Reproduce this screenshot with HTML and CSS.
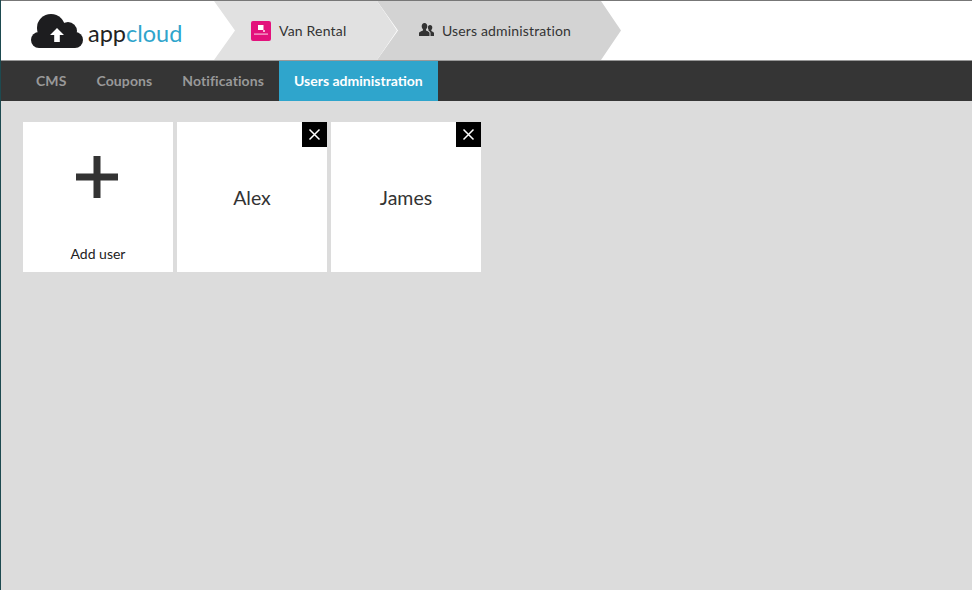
FILE: index.html
```html
<!DOCTYPE html>
<html lang="en">
<head>
<meta charset="utf-8">
<title>appcloud - Users administration</title>
<link rel="stylesheet" href="styles.css">
</head>
<body>
<div class="app">
  <header class="topbar">
    <a class="logo">
      <svg class="logo-cloud" width="52" height="34" viewBox="0 0 52 34">
        <g fill="#1d1d1f">
          <circle cx="20" cy="14" r="14"/>
          <circle cx="37" cy="17" r="9"/>
          <circle cx="44" cy="26" r="8"/>
          <circle cx="8" cy="26" r="8"/>
          <rect x="8" y="18" width="36" height="16"/>
        </g>
        <path fill="#fff" d="M26 14L33 21H28.800V28H23.200V21H19Z"/>
      </svg>
      <span class="logo-text">app<span class="logo-accent">cloud</span></span>
    </a>
    <nav class="crumbs">
      <a class="crumb crumb-app">
        <span class="app-icon">
          <svg width="20" height="20" viewBox="0 0 20 20">
            <rect width="20" height="20" rx="2" fill="#e3127c"/>
            <path fill="#fff" d="M7 4H12.500V9H7Z"/>
            <path fill="#f7b6d6" d="M12 9H14V11H12Z"/>
            <rect x="3" y="12.500" width="14" height="1.200" fill="#f7b6d6"/>
          </svg>
        </span>
        Van Rental
      </a>
      <a class="crumb crumb-section">
        <svg class="users-icon" width="15" height="15" viewBox="0 0 15 15">
          <path fill="#333" d="M5.500 1C7.300 1 8.300 2.500 8.300 4.300C8.300 5.700 7.700 6.800 7 7.400V8.500C8.800 9.200 10.500 10 10.500 11V14H0V11C0 10 2.200 9.200 4 8.500V7.400C3.300 6.800 2.700 5.700 2.700 4.300C2.700 2.500 3.700 1 5.500 1Z"/>
          <path fill="#333" d="M11 3C12.500 3 13.300 4.200 13.300 5.600C13.300 6.700 12.800 7.600 12.300 8.100V8.900C13.500 9.400 15 10.100 15 11V14H11.500V11C11.500 10 10.500 9.200 9.300 8.500C9.500 8.300 9.600 8.100 9.700 7.900C9.200 7.300 8.900 6.500 8.900 5.600C8.900 4.200 9.700 3 11 3Z"/>
        </svg>
        Users administration
      </a>
    </nav>
  </header>
  <nav class="menu">
    <a class="menu-item">CMS</a>
    <a class="menu-item">Coupons</a>
    <a class="menu-item">Notifications</a>
    <a class="menu-item menu-item-active">Users administration</a>
  </nav>
  <main class="content">
    <div class="card card-add">
      <svg class="plus" width="42" height="42" viewBox="0 0 42 42">
        <path fill="#333" d="M17.500 0H24.500V17.500H42V24.500H24.500V42H17.500V24.500H0V17.500H17.500Z"/>
      </svg>
      <span class="add-label">Add user</span>
    </div>
    <div class="card">
      <span class="card-name">Alex</span>
      <button class="remove" aria-label="Remove Alex">
        <svg width="13" height="13" viewBox="0 0 13 13"><path stroke="#fff" stroke-width="1.500" d="M1.500 1.500L11.500 11.500M11.500 1.500L1.500 11.500"/></svg>
      </button>
    </div>
    <div class="card">
      <span class="card-name">James</span>
      <button class="remove" aria-label="Remove James">
        <svg width="13" height="13" viewBox="0 0 13 13"><path stroke="#fff" stroke-width="1.500" d="M1.500 1.500L11.500 11.500M11.500 1.500L1.500 11.500"/></svg>
      </button>
    </div>
  </main>
</div>
</body>
</html>
```
FILE: styles.css
```css
* { box-sizing: border-box; }
html, body { margin: 0; height: 100%; }
body {
  font-family: Lato, "Liberation Sans", sans-serif;
  background: #dcdcdc;
  color: #333;
  overflow: hidden;
}
.app {
  display: flex;
  flex-direction: column;
  height: 590px;
  border-left: 1px solid #1d4a50;
}
.topbar {
  display: flex;
  height: 61px;
  background: #fff;
  border-top: 1px solid #777;
  border-bottom: 1px solid #999;
}
.logo {
  display: flex;
  align-items: flex-start;
  width: 213px;
  padding: 13px 0 0 30px;
}
.logo-cloud { flex: none; }
.logo-text {
  margin: 4px 0 0 5px;
  font-size: 23.500px;
  line-height: 30px;
  font-weight: 400;
  color: #222;
}
.logo-accent { color: #2fa5cc; }
.crumbs { display: flex; height: 59px; }
.crumb {
  display: flex;
  align-items: center;
  height: 59px;
  font-size: 14px;
  color: #333;
  clip-path: polygon(0 0, calc(100% - 20px) 0, 100% 50%, calc(100% - 20px) 100%, 0 100%, 21px 50%);
}
.crumb-app {
  position: relative;
  z-index: 1;
  width: 183px;
  padding-left: 37px;
  background: #e1e1e1;
  letter-spacing: 0.2px;
}
.crumb-section {
  width: 244px;
  margin-left: -20px;
  padding-left: 42px;
  background: #d3d3d3;
  letter-spacing: 0.15px;
}
.app-icon { display: flex; margin-right: 8px; }
.users-icon { margin-right: 8px; flex: none; margin-top: -3px; }
.menu {
  display: flex;
  height: 40px;
  padding-left: 20px;
  background: #353535;
}
.menu-item {
  padding: 0 15px;
  font-size: 14px;
  font-weight: 700;
  line-height: 40px;
  color: #999;
  letter-spacing: 0.1px;
}
.menu-item-active {
  background: #2fa5cc;
  color: #fff;
  letter-spacing: 0;
}
.content {
  flex: 1;
  display: flex;
  align-items: flex-start;
  gap: 4px;
  padding: 21px 0 0 22px;
}
.card {
  position: relative;
  display: flex;
  align-items: center;
  justify-content: center;
  width: 150px;
  height: 150px;
  background: #fff;
}
.card-add {
  flex-direction: column;
  justify-content: flex-start;
  padding-top: 34px;
}
.plus { display: block; margin-right: 1.500px; }
.add-label {
  margin-top: 47px;
  font-size: 14px;
  line-height: 17px;
  color: #222;
}
.card-name {
  padding-top: 2px;
  font-size: 19.500px;
  line-height: 22px;
  color: #333;
}
.remove {
  position: absolute;
  top: 0;
  right: 0;
  display: flex;
  align-items: center;
  justify-content: center;
  width: 25px;
  height: 25px;
  padding: 0;
  border: 0;
  background: #000;
}
```
